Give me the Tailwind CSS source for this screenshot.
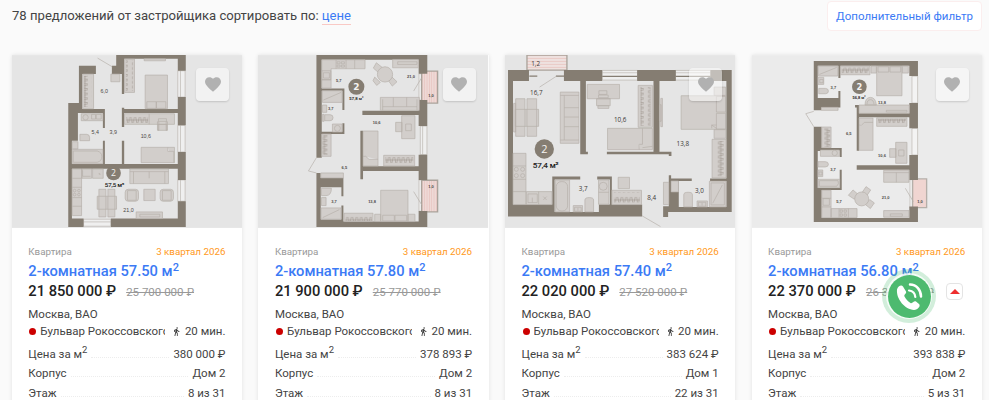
<!DOCTYPE html>
<html lang="ru">
<head>
  <meta charset="UTF-8" />
  <meta name="viewport" content="width=device-width, initial-scale=1.0"/>
  <title>Квартиры от застройщика</title>
  <script src="https://cdn.jsdelivr.net/npm/@tailwindcss/browser@4"></script>
</head>
<body class="bg-[#fafafa] font-['Roboto',sans-serif] text-[#444] h-[400px] overflow-hidden relative">

  <!-- Floor plans -->
  <svg width="0" height="0" class="absolute">
    <defs>
      <pattern id="hangers" width="14" height="30" patternUnits="userSpaceOnUse">
        <path d="M0 15H14M2 6L5 24M8 24L12 6" stroke="#9c958d" stroke-width="1.8" fill="none"/>
      </pattern>
      <pattern id="hangers-v" width="30" height="14" patternUnits="userSpaceOnUse">
        <path d="M15 0V14M6 2L24 5M24 8L6 12" stroke="#9c958d" stroke-width="1.8" fill="none"/>
      </pattern>
      <pattern id="deck" width="7" height="7" patternUnits="userSpaceOnUse">
        <rect width="7" height="7" fill="#eed9d6"/><path d="M1 0V7" stroke="#e6bfbb" stroke-width="2"/>
      </pattern>
      <pattern id="deck-h" width="9" height="9" patternUnits="userSpaceOnUse">
        <rect width="9" height="9" fill="#efe4e2"/><path d="M0 4H9" stroke="#e6b3ae" stroke-width="2"/>
      </pattern>
    </defs>

    <symbol id="plan-1" viewBox="36 30 691.5 519">
      <rect x="36" y="30" width="692" height="519" fill="#e5e5e5"/>
      <g fill="#efefef" stroke="#b9b4ae" stroke-width="2">
        <path d="M534 77h22v79h-22zM534 241h22v80h-22zM534 405h22v64h-22zM251 523h82v21h-82z"/>
        <path d="M542 77v79M542 241v80M542 405v64M251 531h82" fill="none"/>
      </g>
      <path fill="#857d72" d="M349 30H558V77H534V41H373V147H366V87H336V62H349ZM237 62H288V87H247V192H315V249H309V204H234V287H216V357H309V287H315V357H366V287H373V357H534V321H558V405H534V371H216V521H251V546H205V174H237ZM366 188H373V192H534V156H558V241H534V204H373V246H366ZM534 469H558V546H333V521H534Z"/>
      <g fill="#d2cecb" stroke="#b5afa9" stroke-width="2">
        <path d="M374 42h30v100h-30zM248 87h33v104h-33zM333 87h27v23h-27zM436 90h67v101h-67zM441 170h28v20h-28zM470 170h28v20h-28zM433 41h64v6h-64zM374 206h150v32h-150zM448 206v32M424 307h100v46h-100zM504 307v12h18v34M475 238h26v18h-26zM473 230h4v26h-4zM499 230h4v26h-4zM244 206h65v21h-65zM240 268h20q9 0 9 9v10h-29zM217 290h17v22h-17zM217 313h92v43h-92zM217 372h28v140h-28zM217 400h28M217 427h28M217 458h28M217 484h28M246 372h29v28h-29zM278 372h32v28h-32zM390 372h116v44h-116zM390 380h116M401 380v36M495 380v36M448 380v20M297 433h21v83h-21zM324 433h21v83h-21zM292 454h58v39h-58zM432 433h34v34h-34zM409 501h79v20h-79z"/>
        <rect x="376" y="433" width="40" height="36" rx="9"/><rect x="481" y="433" width="40" height="36" rx="9"/>
        <path d="M383 437h26v29h-26zM488 437h26v29h-26zM420 508h60v8h-60zM248 376v18h24M298 384v4h4" fill="none"/>
        <path d="M220 318h72q14 4 14 17t-14 17h-72z" fill="none"/>
        <circle cx="257" cy="217" r="8"/><path d="M275 208h12v14h-12zM289 208h15v14h-15zM476 221h24v8h-24zM293 39L337 65" fill="none"/>
        <circle cx="224" cy="437" r="4"/><circle cx="237" cy="437" r="4"/><circle cx="224" cy="449" r="4"/><circle cx="237" cy="449" r="4"/>
      </g>
      <path d="M378 46h22v92h-22zM252 92h24v94h-24z" fill="url(#hangers-v)"/>
      <path d="M379 212h66v24h-66z" fill="url(#hangers)"/>
      <g font-family="Liberation Sans" font-size="16" fill="#4c4945" text-anchor="middle">
        <text x="313" y="144">6,0</text><text x="286" y="266">5,4</text><text x="340" y="266">3,9</text><text x="438" y="278">10,6</text><text x="386" y="501">21,0</text>
        <text x="344" y="427" font-family="Roboto" font-size="18" fill="#222" stroke="#222" stroke-width=".5">57,5 м²</text>
      </g>
      <circle cx="341" cy="384" r="22" fill="#857d72"/>
      <text x="341" y="393" font-family="Open Sans" font-size="26" fill="#f5f3f1" text-anchor="middle">2</text>
    </symbol>

    <symbol id="plan-2" viewBox="25.5 30 691.5 519">
      <rect x="25" y="30" width="693" height="519" fill="#e5e5e5"/>
      <g fill="#efefef" stroke="#b9b4ae" stroke-width="2">
        <path d="M509 86h8v79h-8zM513 243h20v86h-20zM509 405h8v94h-8z"/><path d="M520 243v86" fill="none"/>
      </g>
      <g fill="url(#deck)" stroke="#aaa39b" stroke-width="4"><path d="M517 78h48v96h-48zM517 406h48v95h-48z"/></g>
      <path fill="#857d72" d="M201 30H534V86H508V44H217V130H285V195H279V137H217V260H279V235H285V267H217V338H201ZM339 197H508V165H534V243H508V210H339ZM333 257H341V364H508V329H534V405H508V378H341V403H333ZM201 384H214V399H282V454H276V427H214V524H276V482H282V530H508V498H534V546H201Z"/>
      <g fill="#d2cecb" stroke="#b5afa9" stroke-width="2">
        <path d="M217 44h130v27h-102v58h-28zM217 77h27v27h-27zM217 104h28M260 44v27M290 44v27M316 44v27M430 43h77v25h-77zM393 157h117v39h-117zM400 163v33M432 157v28M472 157v28M503 163v33M400 185h103M219 137h59v35h-59zM219 180h13v22h-13zM219 208h5v21h-5zM226 209h16q9 0 9 9t-9 9h-16zM249 237h29v24h-29zM217 267h28v67h-28zM457 212h40v69h-40zM439 232h19v28h-19zM341 258h45v105h-45zM341 334h8l10 9h27M403 331h93v32h-93zM214 384h68v15h-68zM216 430h30q0 22-16 22h-14zM216 458h14v24h-14zM215 489h60v34h-60zM284 505h87v25h-87zM376 508h18v22h-18zM476 508h21v22h-21zM394 436h82v94h-82zM400 511h35v17h-35zM437 511h35v17h-35z"/>
        <path d="M381 53l20 16-13 14-16-14zM376 96l17 16-11 9-11-14zM428 96l15 14-14 13-11-15z"/>
        <circle cx="407" cy="88" r="23"/><circle cx="264" cy="250" r="9"/>
        <path d="M222 165L275 142M220 518L270 494M222 83h18v16h-18zM445 50h58v8h-58zM469 237h17v20h-17zM263 50h9v6h-9zM276 50h9v6h-9zM263 60h9v6h-9zM276 60h9v6h-9zM201 338L177 378L201 384M517 98L493 138M493 440L518 481" fill="none"/>
      </g>
      <path d="M219 270h24v60h-24z" fill="url(#hangers-v)"/>
      <path d="M408 336h84v22h-84zM288 508h80v20h-80z" fill="url(#hangers)"/>
      <g font-family="Liberation Sans" font-size="12" font-weight="bold" fill="#4c4945" text-anchor="middle">
        <text x="268" y="110">5,7</text><text x="244" y="195">3,7</text><text x="485" y="99">21,0</text><text x="545" y="157">1,0</text><text x="382" y="238">10,6</text><text x="285" y="373">6,5</text><text x="254" y="473">3,7</text><text x="368" y="473">13,8</text><text x="545" y="429">1,0</text>
        <text x="321" y="164" font-size="13" fill="#222">57,8 м²</text>
      </g>
      <circle cx="321" cy="125" r="24" fill="#857d72"/>
      <text x="321" y="135" font-family="DejaVu Sans" font-weight="bold" font-size="27" fill="#f5f3f1" text-anchor="middle">2</text>
    </symbol>

    <symbol id="plan-3" viewBox="27 30 691.5 519">
      <rect x="26" y="30" width="693" height="519" fill="#e5e5e5"/>
      <path d="M93 30h120v45h-120z" fill="url(#deck-h)" stroke="#aaa39b" stroke-width="4"/>
      <g fill="#efefef" stroke="#b9b4ae" stroke-width="2">
        <path d="M319 76h106v29h-106zM539 76h106v29h-106z"/><path d="M319 83h106M539 83h106" fill="none"/>
        <path d="M100 93h24M180 93h25M319 94h106M539 94h106" stroke="#857d72" stroke-width="4"/>
      </g>
      <path fill="#857d72" d="M36 75H99V108H51V479H169V395H253V404H176V501H309V479H342V404H304V395H348V479H439V515H36ZM204 75H319V108H270V320H276V328H253V108H204ZM424 75H540V108H491V320H527V333H519V328H333V320H473V108H424ZM644 75H708V501H517V516H502V484H519V391H526V401H588V408H549V486H692V408H643V401H692V108H644Z"/>
      <path fill="#e5e5e5" d="M526 408h22v33h-22z"/>
      <g fill="#d2cecb" stroke="#b5afa9" stroke-width="2">
        <path d="M193 141h56v154h-56zM205 151v134M193 151h56M205 188h44M205 216h44M205 245h44M193 285h56M59 161h28v113h-28zM93 161h29v113h-29zM53 175h6v86h-6zM58 193h70v51h-70zM51 325h39v154h-39zM51 363h39M51 403h39M51 440h39M91 440h77v39h-77zM128 440v39M274 118h97v43h-97zM302 161h41v21h-41zM306 182h33v8h-33zM427 121h43v126h-43zM335 250h135v64h-135zM440 250v48h-10v16M440 308l30-4M556 152h134v101h-134zM662 154h28v47h-28zM662 205h28v47h-28zM655 126h35v25h-35zM655 254h35v26h-35zM491 179h5v50h-5zM495 160h5v85h-5zM649 283h42v116h-42zM178 405h43v96h-43zM308 405h31v73h-31zM308 442h31M367 397h34v34h-34zM348 436h89v43h-89zM267 501v-36q0-7 13-7t13 7v36zM232 482h28v19h-28zM503 412h16v67h-16zM526 408h22v33h-22zM564 486v-37q0-7 13-7t13 7v37zM604 468h31v18h-31zM641 409h50v77h-50z"/>
        <rect x="181" y="410" width="34" height="88" rx="15"/><circle cx="322" cy="424" r="12"/>
        <circle cx="61" cy="373" r="6"/><circle cx="80" cy="373" r="6"/><circle cx="61" cy="392" r="6"/><circle cx="80" cy="392" r="6"/>
        <path d="M308 150h29v8h-29zM309 137h24v11h-24zM96 447h28v26h-28zM109 458v15M142 455l10 10M152 455l-10 10M236 487h20v12h-20zM246 489v8M608 472h22v12h-22zM619 474v8M646 414h40v66h-40zM651 475L680 420M182 93L131 126M439 513L494 545M648 240l14 10M648 250v-10h14" fill="none"/>
      </g>
      <path d="M434 126h30v116h-30zM656 288h30v106h-30z" fill="url(#hangers-v)"/>
      <path d="M354 443h78v30h-78z" fill="url(#hangers)"/>
      <g font-family="Open Sans" font-size="19" fill="#3b3835" text-anchor="middle">
        <text x="119" y="63">1,2</text><text x="121" y="150">16,7</text><text x="373" y="231">10,6</text><text x="561" y="303">13,8</text><text x="262" y="437">3,7</text><text x="468" y="465">8,4</text><text x="611" y="443">3,0</text>
        <text x="149" y="369" font-family="Roboto" font-size="24" fill="#222" stroke="#222" stroke-width=".7">57,4 м²</text>
      </g>
      <circle cx="145" cy="312" r="29" fill="#857d72"/>
      <text x="145" y="324" font-family="Open Sans" font-size="33" fill="#f5f3f1" text-anchor="middle">2</text>
    </symbol>

    <symbol id="plan-4" viewBox="28.5 30 691.5 519">
      <rect x="27" y="30" width="694" height="519" fill="#ebebeb"/>
      <g fill="#f3f3f3" stroke="#b9b4ae" stroke-width="2">
        <path d="M509 93h17v81h-17zM509 250h17v80h-17zM503 404h7v85h-7z"/>
      </g>
      <path d="M511 402h42v86h-42z" fill="#f0d5d1" stroke="#b5afa9" stroke-width="4"/>
      <path fill="#857d72" d="M214 48H527V93H501V62H294V99H288V62H226V159H288V138H294V187H237V196H214ZM338 180H350V205H501V174H527V250H501V217H350V317H343V187H338ZM214 245H238V309H298V336H292V317H234V318H226V429H292V374H298V435H238V519H501V485H527V531H214ZM343 361H501V330H527V405H501V374H343Z"/>
      <g fill="#d2cecb" stroke="#b5afa9" stroke-width="2">
        <path d="M228 63h58v30h-58zM294 63h89v26h-89zM386 63h16v21h-16zM480 63h18v21h-18zM403 64h76v88h-76zM407 65h32v16h-32zM443 65h32v16h-32zM350 180h151v25h-151zM227 97h17v21h-17zM229 130h20q9 0 9 8t-9 8h-20zM237 187h50v9h-50zM238 246h28v62h-28zM234 315h57v19h-57zM227 350h21q10 0 10 8t-10 8h-21zM227 375h14v20h-14zM227 403h65v25h-65zM238 436h28v82h-28zM266 491h78v27h-78zM238 460h28M238 486h28M290 491v27M318 491v27M350 219h42v97h-42zM350 240h8l8-8h26M403 218h91v26h-91zM460 292h34v63h-34zM442 311h19v26h-19zM424 376h76v36h-76zM424 383h76M462 383v29M424 497h76v20h-76zM368 180q0-23 16-23t18 23z"/>
        <path d="M332 435l16 14-12 14-18-12zM371 425l14 10-12 18-14-10zM382 464l14 10-12 17-15-12z"/>
        <circle cx="358" cy="462" r="21"/><circle cx="277" cy="324" r="8"/>
        <path d="M231 88L283 67M232 103h10v10h-10zM230 381h9v9h-9zM242 461h19v20h-19zM432 196h62v5h-62zM444 507h36v7h-36zM469 315h16v18h-16zM374 178q0-14 10-14t11 14M214 245L190 206L214 199M489 430L513 470M293 495h7v7h-7zM305 495h7v7h-7zM293 507h7v7h-7zM305 507h7v7h-7zM231 407h56q4 10-4 17h-52z" fill="none"/>
      </g>
      <path d="M240 250h24v55h-24z" fill="url(#hangers-v)"/>
      <path d="M298 67h82v20h-82zM407 221h84v21h-84z" fill="url(#hangers)"/>
      <g font-family="Liberation Sans" font-size="12" font-weight="bold" fill="#4c4945" text-anchor="middle">
        <text x="273" y="133">3,7</text><text x="419" y="178">13,8</text><text x="319" y="270">6,5</text><text x="419" y="336">10,6</text><text x="272" y="377">3,7</text><text x="290" y="474">5,7</text><text x="430" y="462">21,0</text><text x="533" y="474">1,0</text>
        <text x="350" y="162" fill="#222">56,8 м²</text>
      </g>
      <circle cx="351" cy="125" r="22" fill="#857d72"/>
      <text x="351" y="134" font-family="DejaVu Sans" font-weight="bold" font-size="25" fill="#f5f3f1" text-anchor="middle">2</text>
    </symbol>
  </svg>

  <!-- Sorting bar -->
  <header class="flex justify-between items-start h-[55px] pl-3 pr-[7px]">
    <p class="mt-[6px] text-[13.1px] leading-5">78 предложений от застройщика сортировать по: <a href="#" class="inline-block leading-[16px] text-[#3b7af5] border-b border-[#f9c9c5]">цене</a></p>
    <a href="#" class="mt-px w-[155px] h-[30px] pt-px flex items-center justify-center rounded-sm border border-[#fbeeee] bg-white text-[11.5px] text-[#3b7af5]">Дополнительный фильтр</a>
  </header>

  <!-- Cards -->
  <main id="cards" class="grid grid-cols-4 gap-[16.4px] pl-[11.8px] pr-[7.2px]"></main>

  <!-- Call widget -->
  <button class="absolute left-[882px] top-[269px] size-[54px] rounded-full bg-[#4dba6f]/25 flex items-center justify-center">
    <span class="size-[46px] rounded-full bg-white/80 flex items-center justify-center">
      <span class="size-[43px] rounded-full bg-[#4dba6f] flex items-center justify-center">
        <svg viewBox="0 0 43 43" class="size-[43px]" fill="none" stroke="#fff" stroke-linecap="round">
          <path d="M9 14.500C10 11 13.500 9.500 15 11.500L18 16.500C19 18.500 15.500 19.500 16.500 21.500C18 24.500 20 26.500 22.500 28C24.500 29 25.500 25.500 28 26.500L31 29C33 31 30 34.500 26 35C17 34.500 8 24 9 14.500Z" fill="#fff" stroke="none"/>
          <path d="M21 15.500C24.500 16 27 18.500 27.300 22" stroke-width="2.200"/>
          <path d="M22 9.500C28.500 9.500 33 15 33 21.500" stroke-width="2.500"/>
        </svg>
      </span>
    </span>
  </button>
  <button class="absolute left-[946px] top-[283px] w-[17px] h-[17px] rounded-sm border border-[#e4e4e4] bg-white flex items-center justify-center">
    <svg viewBox="0 0 10 5" class="w-[10px] h-[5px]"><path d="M0 5L5 0L10 5Z" fill="#ee2e2e"/></svg>
  </button>

  <script>
    const flats = [
      { plan: 1, area: '57.50', price: '21 850 000', old: '25 700 000', meter: '380 000', house: 'Дом 2', floor: '8 из 31' },
      { plan: 2, area: '57.80', price: '21 900 000', old: '25 770 000', meter: '378 893', house: 'Дом 2', floor: '8 из 31' },
      { plan: 3, area: '57.40', price: '22 020 000', old: '27 520 000', meter: '383 624', house: 'Дом 1', floor: '22 из 31' },
      { plan: 4, area: '56.80', price: '22 370 000', old: '26 320 000', meter: '393 838', house: 'Дом 2', floor: '5 из 31' }
    ];

    function row(label, value) {
      return `
        <div class="flex items-end h-[19.7px] text-[11.5px] leading-5">
          <span>${label}</span>
          <span class="flex-1 mx-1 mb-[6px] border-b border-dotted border-[#ededed]"></span>
          <span>${value}</span>
        </div>`;
    }

    document.getElementById('cards').innerHTML = flats.map(flat => `
      <article class="bg-white shadow-[0_0_4px_rgba(0,0,0,0.1)] h-[360px]">
        <div class="relative h-[173px]">
          <svg class="block w-full h-full" preserveAspectRatio="none"><use href="#plan-${flat.plan}"/></svg>
          <button class="absolute right-[13px] top-[13px] size-[33px] rounded-sm bg-white/50 shadow-[0_1px_2px_rgba(0,0,0,0.15)] flex items-center justify-center">
            <svg viewBox="2 3 20 18.35" class="w-4 h-[15px]" fill="#b1b1b1"><path d="M12 21.35l-1.45-1.32C5.400 15.360 2 12.280 2 8.500 2 5.420 4.420 3 7.500 3c1.740 0 3.410.810 4.500 2.090C13.090 3.810 14.760 3 16.500 3 19.580 3 22 5.420 22 8.500c0 3.780-3.400 6.860-8.550 11.540L12 21.350z"/></svg>
          </button>
        </div>
        <div class="px-[16.5px] pt-4">
          <div class="flex justify-between text-[9.8px] leading-[15px]">
            <span class="text-[#999]">Квартира</span>
            <span class="text-[#ff9922]">3 квартал 2026</span>
          </div>
          <a href="#" class="block mt-[2px] h-5 leading-5 text-[14.7px] font-medium text-[#3b7af5]">2-комнатная ${flat.area} м<sup class="text-[11px]">2</sup></a>
          <div class="flex items-baseline gap-[10px] h-5 leading-5 whitespace-nowrap">
            <span class="text-[14.7px] font-medium text-[#222]">${flat.price} ₽</span>
            <span class="text-[11.5px] text-[#999] line-through">${flat.old} ₽</span>
          </div>
          <p class="mt-1 text-[11.5px] leading-[18px]">Москва, ВАО</p>
          <div class="flex items-center h-4 text-[11.5px] leading-4">
            <span class="ml-[1px] mr-[4px] size-[7px] shrink-0 rounded-full bg-[#cc0000]"></span>
            <span class="w-[125px] overflow-hidden whitespace-nowrap">Бульвар Рокоссовского</span>
            <svg viewBox="5 1 14 22" class="ml-2 w-[7px] h-[9px]" fill="#404040"><path d="M13.500 5.500c1.100 0 2-.9 2-2s-.9-2-2-2-2 .9-2 2 .9 2 2 2zM9.800 8.900L7 23h2.100l1.800-8 2.100 2v6h2v-7.500l-2.100-2 .6-3C14.800 12 16.800 13 19 13v-2c-1.900 0-3.500-1-4.300-2.400l-1-1.600c-.4-.6-1-1-1.700-1-.3 0-.5.1-.8.1L6 8.300V13h2V9.600l1.800-.7"/></svg>
            <span class="ml-auto whitespace-nowrap">20 мин.</span>
          </div>
          <div class="mt-[5px]">
            ${row('Цена за м<sup class="text-[9.5px]">2</sup>', flat.meter + ' ₽')}
            ${row('Корпус', flat.house)}
            ${row('Этаж', flat.floor)}
          </div>
        </div>
      </article>`).join('');
  </script>
</body>
</html>
